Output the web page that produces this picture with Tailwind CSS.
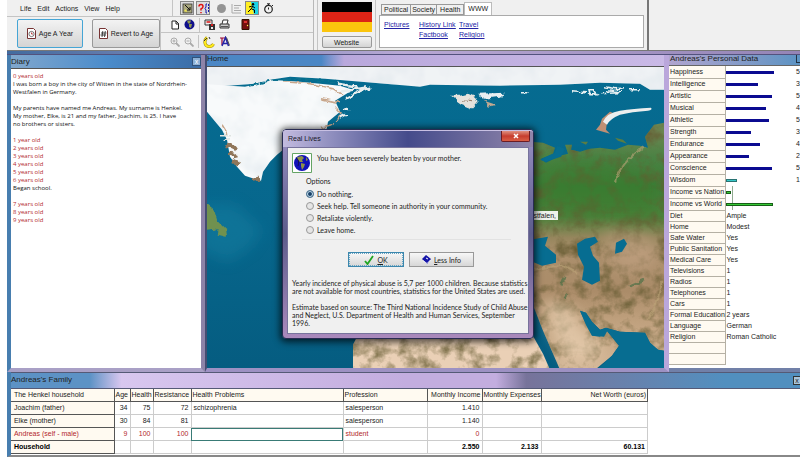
<!DOCTYPE html>
<html lang="en">
<head>
<meta charset="utf-8">
<title>Real Lives</title>
<script src="https://cdn.jsdelivr.net/npm/@tailwindcss/browser@4"></script>
</head>
<body class="bg-white font-['Liberation_Sans',Arial,sans-serif] text-[7px] leading-[8px] text-[#222]">
<div class="relative flex min-h-screen flex-col overflow-hidden pl-[7px]">

  <!-- Toolbars -->
  <header class="flex h-[51px] shrink-0 border-b border-[#777] bg-[#f0f0f0]">
    <div class="flex w-[307px] flex-col border-r border-[#b8b8b8]">
      <div class="flex h-[17px] items-center border-b border-[#c4c4c4]">
        <nav class="flex w-[165px] items-center gap-[6px] pl-[13px] pt-[2px]" aria-label="Menu">
          <button>Life</button><button>Edit</button><button>Actions</button><button>View</button><button>Help</button>
        </nav>
        <div class="flex h-full items-center gap-[2px] border-l border-[#c4c4c4] pl-[7px]">
          <button aria-label="Diary" class="flex size-[14px] items-center justify-center border border-[#888] bg-[#dcdcdc]"><svg class="size-[11px]" viewBox="0 0 11 11"><rect x="1" y="1" width="9" height="9" fill="#a9a77e" stroke="#333" stroke-width=".8"/><path d="M3 2l5 5M8 7V4M8 7H5" stroke="#111" fill="none"/><path d="M2 8l2-2 1 3z" fill="#f2e54e"/></svg></button>
          <button aria-label="Question" class="flex size-[14px] items-center justify-center border border-[#888] bg-[#dcdcdc]"><svg class="size-[11px]" viewBox="0 0 11 11"><path d="M1 3.500Q1 1.500 3 1.500T5 3.500Q5 5 3 6v1.500M3 9v1.200" stroke="#e01010" stroke-width="1.500" fill="none"/><path d="M9 1H8v3L7 5.500 8 7v3h1" stroke="#1717b0" fill="none"/><path d="M10.500 1v9" stroke="#1717b0" stroke-dasharray="2 1"/></svg></button>
          <button aria-label="Stop" class="ml-[3px] flex size-[12px] items-center justify-center"><span class="size-[9px] rounded-full bg-[#949494]"></span></button>
          <button aria-label="List" class="flex size-[14px] items-center justify-center"><svg class="size-[11px]" viewBox="0 0 11 11" stroke="#aaa" fill="none"><path d="M1 1v9h9M3 2.500h7M3 5h5M3 7.500h7"/></svg></button>
          <button aria-label="Run" class="flex size-[14px] items-center justify-center border border-[#888] bg-[#dcdcdc]"><svg class="size-[12px]" viewBox="0 0 12 12"><path d="M0 0h12v12H0z" fill="#19d3e8"/><path d="M0 0h5l3 12H0z" fill="#ffee22"/><circle cx="7" cy="2.300" r="1.200"/><path d="M7 4L5 7l-3 3M5.500 7l3 1v3M3 5l3-1 3 2" stroke="#000" stroke-width="1" fill="none"/></svg></button>
          <button aria-label="Timer" class="flex size-[14px] items-center justify-center"><svg class="size-[11px]" viewBox="0 0 11 11" stroke="#222" fill="none"><circle cx="5.500" cy="6.200" r="3.800" stroke-width="1.200"/><path d="M4 .8h3M5.500 1v2M5.500 6.500V4.500M9 2l1 1"/></svg></button>
        </div>
      </div>
      <div class="flex flex-1">
        <div class="flex w-[154px] items-center gap-[9px] border-r border-[#c4c4c4] pl-[10px]">
          <button class="flex h-[29px] w-[66px] items-center justify-center gap-[3px] rounded-[2px] border border-[#45a5d5] bg-linear-to-b from-[#f3f3f3] to-[#d4d4d4]"><svg class="h-[11px] w-[9px]" viewBox="0 0 9 11"><path d="M.5.5h6l2 2v8h-8z" fill="#fff" stroke="#733"/><circle cx="4.500" cy="6" r="2.600" fill="none" stroke="#555" stroke-width=".8"/><path d="M4.500 4.500V6H6" fill="none" stroke="#a22" stroke-width=".8"/></svg>Age A Year</button>
          <button class="flex h-[29px] w-[68px] items-center justify-center gap-[3px] rounded-[2px] border border-[#999] bg-linear-to-b from-[#f3f3f3] to-[#d4d4d4] whitespace-nowrap"><svg class="h-[11px] w-[9px]" viewBox="0 0 9 11"><path d="M.5.5h6l2 2v8h-8z" fill="#fff" stroke="#733"/><path d="M3.800 3L3 9M6.300 3L5.500 9M2 5h5.500M1.500 7h5.500" stroke="#222" stroke-width=".8"/></svg>Revert to Age</button>
        </div>
        <div class="flex flex-1 flex-col">
          <div class="flex h-[16px] items-center gap-[4px] border-b border-[#c4c4c4] pl-[9px]">
            <button aria-label="New"><svg class="size-[10px]" viewBox="0 0 10 10"><path d="M2 1h4l2.500 2.500V9H2z" fill="#fff" stroke="#222"/><path d="M6 1v3h3" fill="none" stroke="#222"/></svg></button>
            <button aria-label="World"><svg class="size-[11px]" viewBox="0 0 11 11"><circle cx="5.500" cy="5.500" r="5" fill="#10108c"/><path d="M3 1.500l4 0-1 3H4zM5 5l3 0-1 4-2-1z" fill="#8f9a52"/></svg></button>
            <span class="h-[14px] border-l border-[#c4c4c4]"></span>
            <button aria-label="Save"><svg class="size-[11px]" viewBox="0 0 11 11"><path d="M1 1h7v5H1z" fill="#eee" stroke="#333"/><path d="M2.500 3h4" stroke="#d11" stroke-width="1.500"/><path d="M5 5h6v6H5z" fill="#333"/><path d="M7 8h2v2H7z" fill="#eee"/><path d="M7 5h2v2H7z" fill="#d22"/></svg></button>
            <button aria-label="Print"><svg class="size-[11px]" viewBox="0 0 11 11"><path d="M3 5L4 1h5L8 5" fill="#fff" stroke="#333"/><path d="M1 5h9v4H1z" fill="#ccc" stroke="#333"/><path d="M2 7.500h7" stroke="#555"/></svg></button>
            <button aria-label="Exit" class="ml-[7px]"><svg class="h-[11px] w-[9px]" viewBox="0 0 9 11"><path d="M1 .5h7v10H1z" fill="#761010" stroke="#310"/><path d="M3 2h3v2H3z" fill="#d33"/><circle cx="6.500" cy="6.500" r=".7" fill="#ff4"/></svg></button>
          </div>
          <div class="flex flex-1 items-center gap-[4px] pl-[9px]">
            <button aria-label="Zoom in"><svg class="size-[10px]" viewBox="0 0 10 10" stroke="#aaa" fill="none"><circle cx="4" cy="4" r="3"/><path d="M6 6l3.500 3.500" stroke-width="1.800"/><path d="M2.500 4h3M4 2.500v3"/></svg></button>
            <button aria-label="Zoom out"><svg class="size-[10px]" viewBox="0 0 10 10" stroke="#aaa" fill="none"><circle cx="4" cy="4" r="3"/><path d="M6 6l3.500 3.500" stroke-width="1.800"/><path d="M2.500 4h3"/></svg></button>
            <span class="h-[13px] border-l border-[#c4c4c4]"></span>
            <button aria-label="Rotate"><svg class="size-[12px]" viewBox="0 0 12 12"><path d="M4 1.500C1 4 1 9.500 5.500 10.500Q9 11 10.500 8" fill="none" stroke="#9a8b00" stroke-width="3"/><path d="M4 1.500C1 4 1 9.500 5.500 10.500Q9 11 10.500 8" fill="none" stroke="#ffe91c" stroke-width="2"/><path d="M4 2L1 5M6 1l1 2" stroke="#333" fill="none"/></svg></button>
            <button aria-label="Font"><svg class="size-[11px]" viewBox="0 0 11 11" fill="none"><path d="M1 2h5M3 2v7" stroke="#903" stroke-width="1.200"/><path d="M3 10L6.500 1.500 9.500 10M4.500 7.500h4" stroke="#2323a8" stroke-width="1.500"/><path d="M7.500 1.500l3 8" stroke="#222" stroke-width=".8"/></svg></button>
          </div>
        </div>
      </div>
    </div>
    <div class="ml-[3px] flex w-[59px] flex-col items-center gap-[4px] border-x border-[#c4c4c4] pt-[2px]">
      <svg class="h-[30px] w-[50px] shrink-0" viewBox="0 0 50 30" preserveAspectRatio="none" role="img" aria-label="Flag of Germany"><path d="M0 0h50v10H0z"/><path d="M0 10h50v10H0z" fill="#dc2416"/><path d="M0 20h50v10H0z" fill="#fbc50d"/></svg>
      <button class="h-[12px] w-[50px] rounded-[2px] border border-[#999] bg-linear-to-b from-[#f4f4f4] to-[#d4d4d4] text-[7px] leading-[9px]">Website</button>
    </div>
    <div class="flex w-[273px] flex-col border-r-2 border-[#777] py-[2px] pr-[3px] pl-[3px]">
      <div class="flex h-[13px] shrink-0 items-end pl-[2px]" role="tablist">
        <button role="tab" class="h-[11px] border border-[#999] px-[2px]">Political</button>
        <button role="tab" class="h-[11px] border-y border-r border-[#999] px-[1px]">Society</button>
        <button role="tab" class="h-[11px] border-y border-r border-[#999] px-[3px]">Health</button>
        <button role="tab" aria-selected="true" class="h-[13px] border-x border-t border-[#bbb] bg-white px-[3px]">WWW</button>
      </div>
      <div class="grid flex-1 grid-cols-[35px_40px_auto] content-start justify-start border border-[#aaa] bg-white pt-[4px] pl-[4px] leading-[10px] text-[#2323a5] underline">
        <a href="#pictures">Pictures</a><a href="#history">History Link</a><a href="#travel">Travel</a>
        <a href="#factbook" class="col-start-2">Factbook</a><a href="#religion">Religion</a>
      </div>
    </div>
  </header>
  <div class="h-[4px] shrink-0 border-b border-[#53527d] bg-linear-to-r from-[#426b9f] via-[#b8a8d4] via-50% to-[#9484b6]"></div>

  <main class="flex flex-1">
    <!-- Diary -->
    <section class="flex w-[198px] shrink-0 flex-col border-x-4 border-b-4 border-l-[#477eaf] border-r-[#8d83a8] border-b-[#a9a0c6] bg-white">
      <div class="flex h-[13px] items-center justify-between bg-linear-to-r from-[#80a7cd] via-[#4b8ccb] via-50% to-[#3a6ca6]">
        <h2 class="text-[8px]">Diary</h2>
        <button aria-label="Close diary" class="flex size-[9px] items-center justify-center border border-[#31527a] bg-[#8cb0d6] leading-[7px] text-white">x</button>
      </div>
      <div class="border-t border-[#555] p-[2px] pt-[3px] font-['Open_Sans','Liberation_Sans',sans-serif] text-[6px] whitespace-nowrap text-[#111]">
        <p class="text-[#b31f2c]">0 years old</p>
        <p>I was born a boy in the city of Witten in the state of Nordrhein-<br>Westfalen in Germany.</p>
        <p class="mt-[8px]">My parents have named me Andreas. My surname is Henkel.<br>My mother, Elke, is 21 and my father, Joachim, is 25. I have<br>no brothers or sisters.</p>
        <p class="mt-[8px] text-[#b31f2c]">1 year old<br>2 years old<br>3 years old<br>4 years old<br>5 years old<br>6 years old</p>
        <p>Began school.</p>
        <p class="mt-[8px] text-[#b31f2c]">7 years old<br>8 years old<br>9 years old</p>
      </div>
    </section>

    <!-- World map -->
    <section class="flex min-w-0 flex-1 flex-col border-r-[5px] border-b-4 border-l-2 border-r-[#baa7db] border-b-[#9d91c3] border-l-[#454d72]">
      <h2 class="h-[12px] overflow-hidden border-b border-[#555] bg-linear-to-r from-[#4b87c5] from-25% via-[#b9a8dc] via-30% to-[#c9b9e6] text-[8px] leading-[7px]">Home</h2>
      <div class="relative flex-1">
        <svg class="absolute inset-0 size-full" viewBox="207 67 457 301" preserveAspectRatio="xMidYMid slice" role="img" aria-label="World map">
          <defs>
            <linearGradient id="land" x1="0" y1="67" x2="0" y2="367" gradientUnits="userSpaceOnUse">
              <stop offset=".22" stop-color="#6b8450"/><stop offset=".3" stop-color="#4b8244"/><stop offset=".4" stop-color="#3d7c36"/><stop offset=".5" stop-color="#4d803b"/><stop offset=".57" stop-color="#96865d"/><stop offset=".62" stop-color="#ab8f6c"/><stop offset=".75" stop-color="#ab8c69"/><stop offset=".85" stop-color="#c0a17e"/><stop offset="1" stop-color="#d3b696"/>
            </linearGradient>
            <linearGradient id="sea" x1="0" y1="0" x2="0" y2="1"><stop offset="0" stop-color="#056c91"/><stop offset=".5" stop-color="#07678d"/><stop offset="1" stop-color="#055c80"/></linearGradient>
            <filter id="terrain" x="0" y="0" width="1" height="1" color-interpolation-filters="sRGB">
              <feTurbulence type="fractalNoise" baseFrequency=".07" numOctaves="4" seed="8"/>
              <feColorMatrix values="0 0 0 0 .4  0 0 0 0 .36  0 0 0 0 .2  2 0 0 0 -.85" result="n"/>
              <feComposite in="n" in2="SourceAlpha" operator="in" result="m"/>
              <feMerge><feMergeNode in="SourceGraphic"/><feMergeNode in="m"/></feMerge>
            </filter>
            <filter id="ice" x="0" y="0" width="1" height="1">
              <feTurbulence type="fractalNoise" baseFrequency=".04" numOctaves="3" seed="3"/>
              <feColorMatrix values="0 0 0 0 .7  0 0 0 0 .77  0 0 0 0 .82  1.200 0 0 0 -.5" result="n"/>
              <feComposite in="n" in2="SourceAlpha" operator="in" result="m"/>
              <feMerge><feMergeNode in="SourceGraphic"/><feMergeNode in="m"/></feMerge>
            </filter>
            <filter id="rough" x="-.1" y="-.1" width="1.200" height="1.200"><feTurbulence type="fractalNoise" baseFrequency=".15" numOctaves="2" seed="5" result="t"/><feDisplacementMap in="SourceGraphic" in2="t" scale="6" xChannelSelector="R" yChannelSelector="G"/></filter>
            <filter id="soft" x="-.3" y="-.3" width="1.600" height="1.600"><feGaussianBlur stdDeviation="7"/></filter>
          </defs>
          <path d="M200 60h470v315H200z" fill="url(#sea)"/>
          <path d="M200 205L235 205 262 230 250 248 228 262 200 250z" fill="#1680a2" opacity=".5" filter="url(#soft)"/>
          <path d="M200 204h8l6 5 3 10 9 9 1 9-8-2-4-5-8 1h-7z" fill="#6f9150" filter="url(#rough)"/>
          <g filter="url(#ice)">
            <path d="M200 60H670V90H650L640 84 600 83 560 85 500 86 430 85 420 87 385 84 325 79 290 77 270 80 255 84 200 88z" fill="#f0f3f5"/>
            <path d="M200 84L245 87 258 84 270 80 300 82 340 86 353 90 335 101 340 112 328 122 326 133 300 140 283 150 277 155 270 162 263 172 261 181 254 179 245 176 237 167 230 157 227 140 222 130 207 112z" fill="#f8fafb"/>
          </g>
          <g filter="url(#rough)" fill="none" stroke="#c8a68b" stroke-width="1.500">
            <path d="M283 82l28 2 22 5 9 6M322 99l18 4M335 107l6 7-5 9M320 128l14-4M222 126l5 8"/>
            <path d="M340 92l30-5-15 7-10 5M338 84l20 3M343 110l5-1M340 118l6-3" stroke="#e8eeee" stroke-width="2.500"/>
            <path d="M226 147q6-3 9 3M229 154q7 0 8 5M232 161l6 3M252 180l8-1" stroke="#90765a" stroke-width="4"/>
            <path d="M221 135l9 0M222 140l8-1" stroke="#dfe4e1"/>
          </g>
          <path d="M250 86l20-5 30-2 38 3" fill="none" stroke="#07718f" stroke-width="2" stroke-dasharray="9 2" filter="url(#rough)"/>
          <g filter="url(#rough)">
            <path d="M450 96l10 0 8-2 7 3 3 5-6 7-10-4-7-5z" fill="#e6e2dc"/><path d="M478 94l27-1-5 4-15 2z" fill="#eaf0f2"/><path d="M484 101l12 4-7 2z" fill="#c2a891"/><path d="M463 101l10 1" stroke="#9a7e68"/>
            <path d="M521 93h8M572 92l14 1M588 90h6l3 4h-8zM604 87l12 2 8-1M600 94l18-1M606 91l14 1M630 90h9" stroke="#e7f0f2" stroke-width="1.600" fill="none"/>
          </g>
          <path d="M596 130l4-5 2-6 8-7 5 2-8 8-1 8 4 4z" fill="#bf8f74"/>
          <path d="M603 122Q607 113 620 111T651 108q2 2-3 3-16 1-28 4-10 4-13 10z" fill="#eceeee"/>
          <g filter="url(#terrain)">
            <path d="M530 142L543 143 555 148 553 154 541 159 546 163 560 156 568 154 566 148 565 145 572 145 571 150 580 152 590 149 600 148 615 150 628 145 640 146 648 148 645 137 654 125 664 123H670V352L658 350 650 343 645 333 620 332 606 328 600 330 592 322 586 313 580 311 586 325 592 336 600 337 606 330 619 346 612 356 595 370H560L543 331 534 308 530 303z" fill="url(#land)"/>
            <path d="M353 370V345L358 335 520 330 534 338 543 354 550 370z" fill="#ead0b6"/>
          </g>
          <path d="M544 300L574 309 582 326 592 340 606 345 590 360 568 362 549 325z" fill="#ecd3b5" opacity=".65" filter="url(#soft)"/>
          <path d="M540 168q50-20 115 10l0 38q-55 4-115-8z" fill="#347c2c" opacity=".4" filter="url(#soft)"/>
          <path d="M604 230l48 8 5 30-40 4z" fill="#c9a789" opacity=".5" filter="url(#soft)"/>
          <path d="M616 183Q618 165 645 146M648 320q15-25 13-40M534 270l28-5 15 8" fill="none" stroke="#bca478" stroke-width="2" opacity=".6" filter="url(#rough)"/>
          <g fill="#076d91">
            <path d="M577 244L585 239 595 237 598 242 590 247 593 256 599 263 600 281 592 285 582 280 584 267 578 255zM616 243l8-4 3 5-5 8-7 2zM530 240l18-3-3 9 11 9v8l-14 3-12-5zM530 274l4-2v14l-4 5z"/>
            <path d="M557 146l8 3-4 8-16 5-5-2 15-7zM579 140l7 1-4 3z"/>
            <path d="M580 311l6 2 6 9 8 8 6-2 2 2-4 7-12-1-6-11zM606 328l14 4 25 1 5 10 8 7 12 2v20h-75l17-16 7-10-13-16z"/>
          </g>
          <path d="M580 142l8 0-2 3zM615 138l8 2 4 4-9-3z" fill="#5a7d43"/>
          <path d="M567 294l-3 4M562 285l3-8M630 286l15-6" stroke="#416d43" stroke-width="3" opacity=".6" filter="url(#rough)"/>
        </svg>
        <span class="absolute top-[144px] right-[106px] bg-white/90 pr-[2px] leading-[9px]">estfalen,</span>
      </div>
    </section>

    <!-- Personal data -->
    <section class="w-[131px] shrink-0 overflow-hidden border-b-4 border-[#7180a8] bg-white">
      <div class="flex h-[11px] items-start justify-between border-b border-[#666] bg-linear-to-r from-[#b0a4cf] to-[#5b93c3] pl-px leading-[7px]">
        <h2 class="whitespace-nowrap text-[8px]">Andreas's Personal Data</h2>
        <button aria-label="Close personal data" class="h-[8px] w-[4px] border-b border-l border-[#234]"></button>
      </div>
      <table class="w-full table-fixed border-collapse">
        <colgroup><col class="w-[56px]"><col><col class="w-[4px]"></colgroup>
        <tbody id="stats"></tbody>
      </table>
      <table class="w-full table-fixed border-collapse">
        <colgroup><col class="w-[56px]"><col></colgroup>
        <tbody id="facts"></tbody>
      </table>
    </section>
  </main>

  <!-- Family -->
  <section class="flex shrink-0 flex-col border-b-2 border-l-4 border-b-[#888] border-l-[#477eaf]">
    <div class="flex h-[17px] items-center justify-between border-y border-[#555a76] bg-linear-to-r from-[#5c92c5] from-10% via-[#d8c7ef] via-14% to-[#c3addf] to-50%">
      <h2 class="text-[8px]">Andreas's Family</h2>
      <div class="flex h-full w-[304px] items-center justify-end bg-linear-to-r from-transparent via-[#77739a] via-10% to-[#518fbf] to-75%">
        <button aria-label="Close family" class="h-[9px] w-[7px] overflow-hidden border border-r-0 border-[#333] bg-[#a9c5dc] leading-[7px]">x</button>
      </div>
    </div>
    <div class="bg-white pb-[1px]">
      <table class="w-[637px] table-fixed border-collapse [&_td]:border [&_td]:border-[#ccc] [&_td]:px-[2px] [&_th]:border-r [&_th]:border-b [&_th]:border-[#555] [&_th]:bg-[#fffaf1] [&_th]:px-[1px] [&_th]:font-normal [&_th]:whitespace-nowrap [&_tr]:h-[13px]">
        <colgroup><col class="w-[103px]"><col class="w-[16px]"><col class="w-[23px]"><col class="w-[38px]"><col class="w-[152px]"><col class="w-[84px]"><col class="w-[55px]"><col class="w-[59px]"><col></colgroup>
        <thead><tr class="text-left"><th scope="col">&nbsp;The Henkel household</th><th scope="col">Age</th><th scope="col">Health</th><th scope="col">Resistance</th><th scope="col">Health Problems</th><th scope="col">Profession</th><th scope="col" class="text-right">Monthly Income</th><th scope="col">Monthly Expenses</th><th scope="col" class="text-right">Net Worth (euros)</th></tr></thead>
        <tbody class="text-right">
          <tr><th scope="row" class="text-left">&nbsp;Joachim (father)</th><td>34</td><td>75</td><td>72</td><td class="text-left">schizophrenia</td><td class="text-left">salesperson</td><td>1.410</td><td></td><td></td></tr>
          <tr><th scope="row" class="text-left">&nbsp;Elke (mother)</th><td>30</td><td>84</td><td>81</td><td></td><td class="text-left">salesperson</td><td>1.140</td><td></td><td></td></tr>
          <tr class="text-[#b31f2c]"><th scope="row" class="text-left">&nbsp;Andreas (self - male)</th><td>9</td><td>100</td><td>100</td><td class="outline outline-offset-[-1px] outline-[#397b76]"></td><td class="text-left">student</td><td>0</td><td></td><td></td></tr>
          <tr class="font-bold text-black"><th scope="row" class="text-left"><b>&nbsp;Household</b></th><td></td><td></td><td></td><td></td><td></td><td>2.550</td><td>2.133</td><td>60.131</td></tr>
        </tbody>
      </table>
    </div>
  </section>

  <!-- Event dialog -->
  <form role="dialog" aria-labelledby="dialog-title" class="absolute top-[129px] left-[282px] w-[252px] rounded-[4px] border border-[#292c52] bg-linear-to-b from-[#9b91c5] via-[#5c5c8b] to-[#aa89bc] px-[4px] pb-[4px] font-[Lato,'Liberation_Sans',sans-serif] whitespace-nowrap shadow-[0_1px_7px_2px_rgba(0,0,0,0.7)]">
    <div class="-mx-[4px] flex h-[17px] items-start justify-between rounded-t-[3px] border-t border-[#c8c0e3] bg-linear-to-r from-[#c3bbdf] via-[#454b8b] via-50% to-[#9185a9] pr-[3px] pl-[5px]">
      <h2 id="dialog-title" class="pt-[4px] font-['Liberation_Sans',sans-serif] text-[#171727]">Real Lives</h2>
      <button type="button" aria-label="Close" class="flex h-[11px] w-[29px] items-center justify-center rounded-b-[2px] border border-t-0 border-[#6b1c23] bg-linear-to-b from-[#de9081] via-[#c63c2e] to-[#d95e45]"><svg class="size-[6px]" viewBox="0 0 6 6"><path d="M1 1l4 4M5 1L1 5" stroke="#fff" stroke-width="1.500"/></svg></button>
    </div>
    <div class="border border-[#77739c] bg-[#f0f0f0] px-[4px] pt-[5px] pb-[6px]">
      <div class="flex gap-[5px]">
        <svg class="size-[20px]" viewBox="0 0 20 20"><path d="M.5.5h19v19H.5z" fill="#fff" stroke="#64a464"/><circle cx="10" cy="10" r="8" fill="#1010b8"/><path d="M5 4l5-1 2 2-2 2 1 2-3 0-2-2zM9 10l4 1-1 3-2 3-1-4zM14 4l2 3-2 1z" fill="#8d8f48"/><path d="M4 5q4 2 2 8" stroke="#111155" fill="none"/></svg>
        <p class="pt-[1px]">You have been severely beaten by your mother.</p>
      </div>
      <fieldset class="mt-[4px] mr-[13px] ml-[10px] border-b border-[#e2e2e2] pb-[3px] pl-[4px]">
        <legend class="mb-[3px] leading-[8px]">Options</legend>
        <div class="flex flex-col [&_input]:m-0 [&_input]:size-[8px] [&_input]:appearance-none [&_input]:rounded-full [&_input]:border [&_input]:border-[#999] [&_input]:bg-[#e5e5e5] [&_input:checked]:border-[#577c98] [&_input:checked]:bg-[#173f67] [&_input:checked]:shadow-[inset_0_0_0_1px_#c9e2f0] [&_label]:flex [&_label]:h-[12px] [&_label]:items-center [&_label]:gap-[3px]">
          <label><input type="radio" name="choice" checked>Do nothing.</label>
          <label><input type="radio" name="choice">Seek help. Tell someone in authority in your community.</label>
          <label><input type="radio" name="choice">Retaliate violently.</label>
          <label><input type="radio" name="choice">Leave home.</label>
        </div>
      </fieldset>
      <div class="mt-[12px] flex justify-center gap-[5px] pl-[6px]">
        <button type="button" class="flex h-[15px] w-[56px] items-center justify-center gap-[3px] border border-[#3c87ad] bg-linear-to-b from-[#f7f7f7] to-[#d7d7d7] outline-1 outline-offset-[-2px] outline-dotted outline-[#67a5c4]"><svg class="size-[10px]" viewBox="0 0 10 10"><path d="M1 6l2.500 3L9 1" fill="none" stroke="#20a521" stroke-width="1.800"/></svg><span><u>O</u>K</span></button>
        <button type="button" class="flex h-[15px] w-[65px] items-center justify-center gap-[3px] border border-[#999] bg-linear-to-b from-[#f7f7f7] to-[#d7d7d7]"><svg class="size-[9px]" viewBox="0 0 9 9"><path d="M0 4l4-4 5 4-4 5z" fill="#1515a8"/><path d="M1 5.500l4 3L8.500 5" fill="none" stroke="#fff" stroke-width=".8"/><path d="M4 3l2 1" stroke="#fff"/></svg><span><u>L</u>ess Info</span></button>
      </div>
      <p class="mt-[12px]">Yearly incidence of physical abuse is 5,7 per 1000 children. Because statistics<br>are not available for most countries, statistics for the United States are used.</p>
      <p class="mt-[8px]">Estimate based on source: The Third National Incidence Study of Child Abuse<br>and Neglect, U.S. Department of Health and Human Services, September<br>1996.</p>
    </div>
  </form>
</div>

<script>
const stats = [['Happiness',48,'5'],['Intelligence',32,'3'],['Artistic',46,'5'],['Musical',40,'4'],['Athletic',43,'5'],['Strength',25,'3'],['Endurance',34,'4'],['Appearance',23,'2'],['Conscience',46,'5'],['Wisdom',11,'1','cyan'],['Income vs Nation',5,'','green'],['Income vs World',47,'','green']];
const colours = {cyan:'bg-[#36c9c9] border border-[#287272]', green:'bg-[#36c936] border border-[#176017]'};
document.getElementById('stats').innerHTML = stats.map(([name,width,value,colour]) =>
  `<tr class="h-[12px]"><th scope="row" class="border-r border-b border-[#b5b0a4] bg-[#fffaf1] p-0 pl-px text-left font-normal whitespace-nowrap">${name}</th><td class="p-0"><div class="flex h-[12px] items-center ${name.startsWith('Income') ? 'bg-linear-to-r from-transparent from-[6px] via-[#225522] via-[6px] to-transparent to-[7px]' : ''}"><div class="h-[3px] ${colours[colour] || 'bg-[#0b0b91]'}" style="width:${width}px"></div></div></td><td class="p-0">${value}</td></tr>`).join('');
const facts = [['Diet','Ample'],['Home','Modest'],['Safe Water','Yes'],['Public Sanitation','Yes'],['Medical Care','Yes'],['Televisions','1'],['Radios','1'],['Telephones','1'],['Cars','1'],['Formal Education','2 years'],['Language','German'],['Religion','Roman Catholic'],['',''],['','']];
document.getElementById('facts').innerHTML = facts.map(([name,value]) =>
  `<tr class="h-[11px]"><th scope="row" class="border-r border-b border-[#b5b0a4] bg-[#fffaf1] p-0 pl-px text-left font-normal whitespace-nowrap">${name}</th><td class="p-0 pl-px">${value}</td></tr>`).join('');
</script>
</body>
</html>
